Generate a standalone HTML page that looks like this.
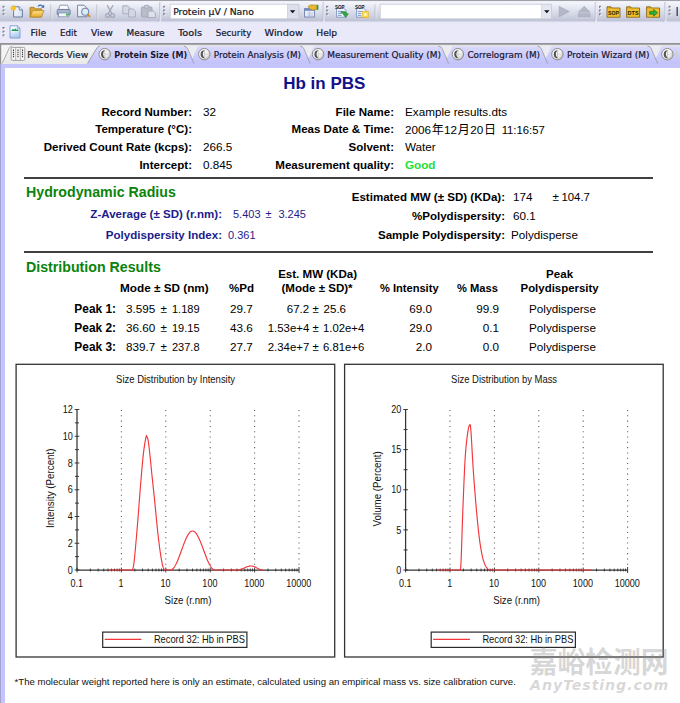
<!DOCTYPE html>
<html lang="en">
<head>
<meta charset="utf-8">
<title>Hb in PBS - Protein Size report</title>
<style>
html,body{margin:0;padding:0;}
body{width:680px;height:703px;position:relative;overflow:hidden;background:#fff;
  font-family:"Liberation Sans","Noto Sans CJK SC",sans-serif;font-size:11.45px;color:#000;}
.abs,.t,.b,.r,.rb{position:absolute;white-space:nowrap;}
/* ---------- chrome ---------- */
#tb1{position:absolute;left:0;top:0;width:680px;height:22px;
  background:linear-gradient(#8c8c98 0,#8c8c98 1px,#f4f5fb 1.5px,#eceef7 8px,#d9dcea 14px,#c9ccdd 20px,#d5d7e6 22px);}
#tb2{position:absolute;left:0;top:22px;width:680px;height:21px;background:#e9e9fa;}
#tabs{position:absolute;left:0;top:43px;width:680px;height:21px;
  background:linear-gradient(#7a7a7a 0,#8a8a8a 1.2px,#d8d8d8 2px,#f2f2f2 3.5px,#f3f3f3 12px,#e9e9e9 21px);}
#frame{position:absolute;left:0;top:63.5px;width:680px;height:640px;background:#c5c5fc;}
#page{position:absolute;left:4.8px;top:68.3px;width:675px;height:635px;background:#fff;}
.ui{font-family:"DejaVu Sans","Liberation Sans",sans-serif;font-size:9.2px;color:#1a1a2a;position:absolute;white-space:nowrap;line-height:12px;}
.grip{position:absolute;width:2px;height:11px;
  background:repeating-linear-gradient(#7f8296 0,#7f8296 1.5px,transparent 1.5px,transparent 3.5px);}
.sep{position:absolute;width:1px;height:15px;top:4px;background:#b8bbcc;box-shadow:1px 0 0 #f4f5fb;}
.combo{position:absolute;top:3px;height:16px;background:#fff;border:1px solid #c3c6d6;box-sizing:border-box;}
/* ---------- report text ---------- */
.t{line-height:14px;font-size:11.7px;}
.b{line-height:14px;font-weight:bold;font-size:11.55px;}
.r{line-height:14px;text-align:right;font-size:11.7px;}
.rb{line-height:14px;text-align:right;font-weight:bold;font-size:11.55px;}
.navy{color:#1c1c8c;}
.green{color:#0b830b;font-size:14.2px;font-weight:bold;line-height:16px;}
.hr{position:absolute;left:24px;width:628.5px;height:1.25px;background:#404040;}
.c{text-align:center;}
.cj{font-family:"Noto Sans CJK SC","WenQuanYi Zen Hei",sans-serif;font-size:12px;margin:0 0.4px 0 0.7px;}
</style>
</head>
<body>
<!-- ================= TOOLBAR ROW 1 ================= -->
<!-- ================= MENU ROW ================= -->
<!-- ================= TAB STRIP ================= -->
<!-- ================= REPORT FRAME ================= -->
<!--CHROME-BEGIN-->
<svg class="abs" style="left:0;top:0;" width="680" height="70" viewBox="0 0 680 70">
<defs>
<linearGradient id="gtb" x1="0" y1="0" x2="0" y2="1">
 <stop offset="0" stop-color="#9b9ba6"/><stop offset="0.045" stop-color="#a5a5b0"/>
 <stop offset="0.07" stop-color="#f6f7fc"/><stop offset="0.2" stop-color="#eef0f8"/>
 <stop offset="0.5" stop-color="#dcdfec"/><stop offset="0.8" stop-color="#cacddd"/>
 <stop offset="0.93" stop-color="#c0c3d5"/><stop offset="1" stop-color="#d0d2e2"/>
</linearGradient>
<linearGradient id="gtab" x1="0" y1="0" x2="0" y2="1">
 <stop offset="0" stop-color="#dedefd"/><stop offset="0.5" stop-color="#cfcffc"/><stop offset="1" stop-color="#c2c2fb"/>
</linearGradient>
<linearGradient id="gtab0" x1="0" y1="0" x2="0" y2="1">
 <stop offset="0" stop-color="#f6f6f6"/><stop offset="1" stop-color="#e9e9e9"/>
</linearGradient>
<linearGradient id="gstrip" x1="0" y1="0" x2="0" y2="1">
 <stop offset="0" stop-color="#85858a"/><stop offset="0.55" stop-color="#8f8f94"/><stop offset="1" stop-color="#d4d4d8"/>
</linearGradient>
<radialGradient id="gball" cx="0.38" cy="0.35" r="0.7">
 <stop offset="0" stop-color="#ffffff"/><stop offset="0.6" stop-color="#f0f0f0"/><stop offset="1" stop-color="#b8b8b8"/>
</radialGradient>
<linearGradient id="gfold" x1="0" y1="0" x2="0" y2="1">
 <stop offset="0" stop-color="#fbe28a"/><stop offset="1" stop-color="#e9a92c"/>
</linearGradient>
<linearGradient id="gpage" x1="0" y1="0" x2="1" y2="1">
 <stop offset="0" stop-color="#ffffff"/><stop offset="1" stop-color="#cfdcf2"/>
</linearGradient>
<linearGradient id="gpage2" x1="0" y1="0" x2="0.3" y2="1"><stop offset="0" stop-color="#ffffff"/><stop offset="0.5" stop-color="#e4eefb"/><stop offset="1" stop-color="#a9c9f0"/></linearGradient>
<g id="grip">
 <rect x="0" y="5.8" width="2" height="2" fill="#777a90"/><rect x="0" y="9.5" width="2" height="2" fill="#777a90"/><rect x="0" y="13.2" width="2" height="2" fill="#777a90"/>
 <rect x="1" y="6.8" width="1.6" height="1.6" fill="#fff" opacity=".7"/><rect x="1" y="10.5" width="1.6" height="1.6" fill="#fff" opacity=".7"/><rect x="1" y="14.2" width="1.6" height="1.6" fill="#fff" opacity=".7"/>
</g>
<g id="ball">
 <circle cx="6.2" cy="6.2" r="5.75" fill="url(#gball)" stroke="#8a8a8a" stroke-width="0.95"/>
 <path d="M6.5 2.2 A4 4 0 0 0 6.5 10.2 A5.2 5.2 0 0 1 6.5 2.2Z" fill="#3c3c3c" opacity=".88"/>
 <path d="M6.3 2V10.4" stroke="#9a9a9a" stroke-width="0.5"/><path d="M6.4 6.2H9.4" stroke="#b5b5b5" stroke-width="0.5"/>
</g>
</defs>
<rect x="0" y="0" width="680" height="22" fill="url(#gtb)"/>
<rect x="0" y="22" width="680" height="21.5" fill="#e9e9fa"/>
<rect x="0" y="21.6" width="680" height="1" fill="#e3e5f3"/>
<path d="M157.4 22 Q159.6 22 159.6 19.4 L159.6 1.4 L161.2 1.4 L161.2 22Z" fill="#e6e8f6" opacity=".95"/>
<path d="M159.6 2 V19.4 Q159.6 21.4 157.4 21.6" fill="none" stroke="#b4b7ca" stroke-width="0.7"/>
<path d="M320.8 22 Q323.0 22 323.0 19.4 L323.0 1.4 L324.6 1.4 L324.6 22Z" fill="#e6e8f6" opacity=".95"/>
<path d="M323.0 2 V19.4 Q323.0 21.4 320.8 21.6" fill="none" stroke="#b4b7ca" stroke-width="0.7"/>
<path d="M593.0 22 Q595.2 22 595.2 19.4 L595.2 1.4 L596.8000000000001 1.4 L596.8000000000001 22Z" fill="#e6e8f6" opacity=".95"/>
<path d="M595.2 2 V19.4 Q595.2 21.4 593.0 21.6" fill="none" stroke="#b4b7ca" stroke-width="0.7"/>
<path d="M662.5999999999999 22 Q664.8 22 664.8 19.4 L664.8 1.4 L666.4 1.4 L666.4 22Z" fill="#e6e8f6" opacity=".95"/>
<path d="M664.8 2 V19.4 Q664.8 21.4 662.5999999999999 21.6" fill="none" stroke="#b4b7ca" stroke-width="0.7"/>
<use href="#grip" x="2.6" y="0"/>
<use href="#grip" x="163.2" y="0"/>
<use href="#grip" x="326.2" y="0"/>
<use href="#grip" x="599.0" y="0"/>
<use href="#grip" x="668.6" y="0"/>
<g transform="translate(2.6 21.4)"><rect x="0" y="5.6" width="2" height="2" fill="#73768c"/><rect x="0" y="9.3" width="2" height="2" fill="#73768c"/><rect x="0" y="13" width="2" height="2" fill="#73768c"/><rect x="1" y="6.6" width="1.6" height="1.6" fill="#fff" opacity=".75"/><rect x="1" y="10.3" width="1.6" height="1.6" fill="#fff" opacity=".75"/><rect x="1" y="14" width="1.6" height="1.6" fill="#fff" opacity=".75"/></g>
<rect x="50.4" y="4.6" width="1" height="15" fill="#bdbcc4"/><rect x="51.4" y="4.6" width="1" height="15" fill="#eceef6" opacity=".7"/>
<rect x="96.4" y="4.6" width="1" height="15" fill="#bdbcc4"/><rect x="97.4" y="4.6" width="1" height="15" fill="#eceef6" opacity=".7"/>
<rect x="374.5" y="4.6" width="1" height="15" fill="#bdbcc4"/><rect x="375.5" y="4.6" width="1" height="15" fill="#eceef6" opacity=".7"/>
<g><path d="M13.6 6.8h5.6l3.2 3.2v7H13.6z" fill="url(#gpage)" stroke="#5b6f9a" stroke-width="0.9"/><path d="M19.2 6.8v3.2h3.2" fill="#dfe8f7" stroke="#5b6f9a" stroke-width="0.8"/><path transform="translate(13.4 8) scale(0.74) translate(-13.4 -8.4)" d="M13.4 4.4l.9 2 2-.8-.8 2 2 .9-2 .9.8 2-2-.8-.9 2-.9-2-2 .8.8-2-2-.9 2-.9-.8-2 2 .8z" fill="#f8c818" stroke="#e0a000" stroke-width="0.4"/></g>
<g><path d="M30 7.4h4.2l1.2 1.4h6.2v8.2H30z" fill="#d9a53a" stroke="#a97818" stroke-width="0.8"/><path d="M32.6 10.6h11.4l-2.6 6.4H30z" fill="url(#gfold)" stroke="#b98520" stroke-width="0.8"/><path d="M38 6.4q2.6-2.6 5 .2" fill="none" stroke="#3a68b0" stroke-width="1.1"/><path d="M44.2 4.6v3.2h-3.1z" fill="#3a68b0"/></g>
<g><path d="M60 5.2h7.6l1.4 4.4h-10.4z" fill="#fdfdff" stroke="#7886a6" stroke-width="0.8"/><rect x="57.2" y="9.4" width="13" height="5.6" rx="1" fill="#a9b5d0" stroke="#66748f" stroke-width="0.8"/><rect x="58.6" y="13" width="10.2" height="3.8" fill="#f4f6fc" stroke="#7a88a6" stroke-width="0.7"/><rect x="66" y="13.6" width="2.4" height="2" fill="#2fb84a"/></g>
<g><path d="M77.6 5.2h6.4l3 3v8.6h-9.4z" fill="url(#gpage)" stroke="#6a7a9c" stroke-width="0.9"/><circle cx="85.2" cy="11.8" r="3.5" fill="#d9ecfb" stroke="#7b8aa8" stroke-width="1.1"/><path d="M88 14.6l1.6 1.8" stroke="#e08a18" stroke-width="1.9" stroke-linecap="round"/></g>
<g fill="none" stroke="#a3a6b8" stroke-width="1.25" stroke-linecap="round"><path d="M107.4 5.6l4.6 8.2M112.8 5.6l-4.6 8.2"/><circle cx="107.6" cy="15.4" r="1.9"/><circle cx="112.6" cy="15.4" r="1.9"/></g>
<g fill="#d5d8e4" stroke="#a6a9bb" stroke-width="0.9"><path d="M122.8 5.8h5l2 2v6h-7z"/><path d="M128.6 9h4.6l2.2 2.2v5.8h-6.8z"/></g>
<g stroke="#a2a5b7" stroke-width="0.9"><rect x="141.4" y="7" width="10.6" height="10" rx="1" fill="#b9bccb"/><rect x="144.4" y="5.4" width="4.6" height="2.8" rx=".8" fill="#c9ccd9"/><path d="M148 11h5.2l2.2 2.2v4.4H148z" fill="#dfe1ea"/></g>
<rect x="170.2" y="4.2" width="128.8" height="14.6" fill="#fff" stroke="#c5c8d8" stroke-width="0.8"/>
<rect x="287.4" y="4.7" width="11.2" height="13.6" fill="#dde0ec" stroke="#c3c6d6" stroke-width="0.6"/>
<path d="M289.9 10.2h5.4l-2.7 3z" fill="#111"/>
<text x="173.2" y="14.7" font-family="'DejaVu Sans','Liberation Sans',sans-serif" font-size="9.3" fill="#14141e" stroke="#14141e" stroke-width="0.2" textLength="80.6" lengthAdjust="spacingAndGlyphs">Protein µV / Nano</text>
<g><rect x="304.6" y="8.6" width="9.8" height="8.4" fill="#e9eefa" stroke="#6b7fa8" stroke-width="0.9"/><rect x="304.6" y="8.6" width="9.8" height="2.2" fill="#6f8cc4"/><path d="M307.4 13.2h5.6M307.4 15.2h5.6M309.4 11.4v5" stroke="#9fb0d2" stroke-width="0.6"/><path d="M308 6.6q2.4-2.6 5.4-1.6l3.6.2v4.2l-4.2.6q-2.6.2-4.8-3.4z" fill="#e8b830" stroke="#a8801c" stroke-width="0.6"/><rect x="316.8" y="4.8" width="1.6" height="5" fill="#2f9a48"/></g>
<g><path d="M336.6 8.2h7l2.6 2.6v6.4H336.6z" fill="#eef3fc" stroke="#6d86b8" stroke-width="0.8"/><path d="M338 11.4h4.4M338 13.4h3.4M338 15.4h3.4" stroke="#6f8fca" stroke-width="0.9"/><text x="335" y="8.9" font-family="'Liberation Sans',sans-serif" font-weight="bold" font-size="5.4" fill="#1a1a1a" textLength="9.6" lengthAdjust="spacingAndGlyphs">SOP</text><path d="M341.2 11.6h3.4q2 0 2 2.2h1.8l-2.8 3.6-2.8-3.6h1.8q0-.6-.8-.6h-2.6z" fill="#2fae3e" stroke="#1c7a28" stroke-width="0.5"/></g>
<g><path d="M356.6 8.2h7l2.6 2.6v6.4H356.6z" fill="#eef3fc" stroke="#6d86b8" stroke-width="0.8"/><path d="M358 11.4h4.4M358 13.4h3.4M358 15.4h3.4" stroke="#6f8fca" stroke-width="0.9"/><text x="355" y="8.9" font-family="'Liberation Sans',sans-serif" font-weight="bold" font-size="5.4" fill="#1a1a1a" textLength="9.6" lengthAdjust="spacingAndGlyphs">SOP</text><rect x="362.4" y="11.6" width="6" height="6" fill="#ffd83a" stroke="#e2ad10" stroke-width="0.5"/><circle cx="365.4" cy="14.6" r="1.5" fill="#fff6c8"/></g>
<rect x="380.2" y="4.2" width="171.4" height="14.6" fill="#fff" stroke="#c5c8d8" stroke-width="0.8"/>
<rect x="541.2" y="4.7" width="10" height="13.6" fill="#e4e7f1" stroke="#c9ccd9" stroke-width="0.5"/>
<path d="M544.1 10.2h5.4l-2.7 3z" fill="#111"/>
<path d="M559.2 6.4l10 5.2-10 5.2z" fill="#b4b7c7" stroke="#a3a6b8" stroke-width="0.6"/>
<path d="M584.2 6.2l6 6h-12z" fill="#b4b7c7" stroke="#a3a6b8" stroke-width="0.5"/><rect x="578.2" y="13.8" width="12" height="3" fill="#b4b7c7" stroke="#a3a6b8" stroke-width="0.5"/>
<g><path d="M607 6.8h4l1 1.2h8v9.2H607z" fill="#dca520" stroke="#7e5c0e" stroke-width="0.8"/><rect x="607.6" y="8.6" width="11.8" height="8" fill="#efbe2e"/><text x="608" y="15" font-family="'Liberation Sans',sans-serif" font-weight="bold" font-size="6.2" fill="#2a1c00" textLength="11" lengthAdjust="spacingAndGlyphs">SOP</text></g>
<g><path d="M626.6 6.8h4l1 1.2h8v9.2H626.6z" fill="#dca520" stroke="#7e5c0e" stroke-width="0.8"/><rect x="627.2" y="8.6" width="11.8" height="8" fill="#efbe2e"/><text x="627.6" y="15" font-family="'Liberation Sans',sans-serif" font-weight="bold" font-size="6.2" fill="#2a1c00" textLength="11" lengthAdjust="spacingAndGlyphs">DTS</text></g>
<g><path d="M646.6 6.8h4l1 1.2h8v9.2H646.6z" fill="#dca520" stroke="#7e5c0e" stroke-width="0.8"/><rect x="647.2" y="8.6" width="11.8" height="8" fill="#efbe2e"/></g>
<path d="M649.6 11.4h4v-2l4 3.4-4 3.4v-2h-4z" fill="#2fae3e" stroke="#14641e" stroke-width="0.6"/>
<rect x="676.4" y="7" width="1.6" height="9" fill="#555a70"/>
<g><path d="M10 25.8h7.4l2.6 2.6v9.6H10z" fill="url(#gpage2)" stroke="#7d9ad0" stroke-width="0.9"/><path d="M17.4 25.8v2.6H20" fill="none" stroke="#7d9ad0" stroke-width="0.7"/><path d="M11.4 31q1.4-3.6 2.8-1 1.2-3 2.4 0 1.2-2 2 1z" fill="#19a050"/></g>
<text x="30.6" y="35.7" font-family="'DejaVu Sans','Liberation Sans',sans-serif" font-size="9.3" fill="#16162a" stroke="#16162a" stroke-width="0.22" textLength="15.7" lengthAdjust="spacingAndGlyphs">File</text>
<text x="60.0" y="35.7" font-family="'DejaVu Sans','Liberation Sans',sans-serif" font-size="9.3" fill="#16162a" stroke="#16162a" stroke-width="0.22" textLength="16.9" lengthAdjust="spacingAndGlyphs">Edit</text>
<text x="91.0" y="35.7" font-family="'DejaVu Sans','Liberation Sans',sans-serif" font-size="9.3" fill="#16162a" stroke="#16162a" stroke-width="0.22" textLength="21.7" lengthAdjust="spacingAndGlyphs">View</text>
<text x="126.6" y="35.7" font-family="'DejaVu Sans','Liberation Sans',sans-serif" font-size="9.3" fill="#16162a" stroke="#16162a" stroke-width="0.22" textLength="38.0" lengthAdjust="spacingAndGlyphs">Measure</text>
<text x="178.0" y="35.7" font-family="'DejaVu Sans','Liberation Sans',sans-serif" font-size="9.3" fill="#16162a" stroke="#16162a" stroke-width="0.22" textLength="24.0" lengthAdjust="spacingAndGlyphs">Tools</text>
<text x="215.8" y="35.7" font-family="'DejaVu Sans','Liberation Sans',sans-serif" font-size="9.3" fill="#16162a" stroke="#16162a" stroke-width="0.22" textLength="35.5" lengthAdjust="spacingAndGlyphs">Security</text>
<text x="264.5" y="35.7" font-family="'DejaVu Sans','Liberation Sans',sans-serif" font-size="9.3" fill="#16162a" stroke="#16162a" stroke-width="0.22" textLength="38.4" lengthAdjust="spacingAndGlyphs">Window</text>
<text x="316.3" y="35.7" font-family="'DejaVu Sans','Liberation Sans',sans-serif" font-size="9.3" fill="#16162a" stroke="#16162a" stroke-width="0.22" textLength="20.8" lengthAdjust="spacingAndGlyphs">Help</text>
<rect x="0" y="43.2" width="680" height="21" fill="url(#gtab)"/>
<rect x="0" y="44.6" width="680" height="2.2" fill="#e2e2ea"/>
<path d="M0 43.2H99.2L87.2 64H0z" fill="url(#gtab0)"/>
<path d="M0 43.2H10.6L2.2 63.6H0z" fill="#f4f4f4"/>
<rect x="0" y="43.1" width="680" height="2" fill="url(#gstrip)"/>
<rect x="0" y="44" width="1.2" height="20" fill="#8f8f94"/>
<path d="M2.2 63.4 L9.2 48.2 Q10 46.4 12 46.2" fill="none" stroke="#9c9c9c" stroke-width="0.85"/>
<path d="M87.4 63.6 L97.2 47.6 Q98 46.4 99.8 46.3" fill="none" stroke="#9a9aa0" stroke-width="0.85"/>
<path d="M185.4 45.4H198.20000000000002L192.20000000000002 58.6z" fill="#ececf0"/>
<path d="M183.8 46.1 Q186.6 46.3 187.8 49 L194.0 63.6" fill="none" stroke="#9a9aa4" stroke-width="0.85"/>
<path d="M301.6 45.4H314.40000000000003L308.40000000000003 58.6z" fill="#ececf0"/>
<path d="M300.0 46.1 Q302.8 46.3 304.0 49 L310.20000000000005 63.6" fill="none" stroke="#9a9aa4" stroke-width="0.85"/>
<path d="M440.0 45.4H452.8L446.8 58.6z" fill="#ececf0"/>
<path d="M438.4 46.1 Q441.2 46.3 442.4 49 L448.6 63.6" fill="none" stroke="#9a9aa4" stroke-width="0.85"/>
<path d="M539.0 45.4H551.8L545.8 58.6z" fill="#ececf0"/>
<path d="M537.4 46.1 Q540.2 46.3 541.4 49 L547.6 63.6" fill="none" stroke="#9a9aa4" stroke-width="0.85"/>
<path d="M649.0 45.4H661.8L655.8 58.6z" fill="#ececf0"/>
<path d="M647.4 46.1 Q650.2 46.3 651.4 49 L657.6 63.6" fill="none" stroke="#9a9aa4" stroke-width="0.85"/>
<g><rect x="11.2" y="47.4" width="13.6" height="13" rx="1.2" fill="#f7f7f7" stroke="#8a8a8a" stroke-width="0.8"/><path d="M15.7 47.6v12.6M20.3 47.6v12.6" stroke="#9a9a9a" stroke-width="0.7"/><path d="M13.5 49.6v7.6M18 49.6v7.6M22.5 49.6v7.6" stroke="#3c3c3c" stroke-width="1.1" stroke-dasharray="1.4 0.7"/></g>
<use href="#ball" x="98.5" y="48"/>
<use href="#ball" x="198.1" y="48"/>
<use href="#ball" x="311.9" y="48"/>
<use href="#ball" x="451.7" y="48"/>
<use href="#ball" x="551.2" y="48"/>
<use href="#ball" x="661.2" y="48"/>
<text x="27.2" y="58.3" font-family="'DejaVu Sans','Liberation Sans',sans-serif" font-size="9.3" fill="#17172e" stroke="#17172e" stroke-width="0.2" textLength="61.0" lengthAdjust="spacingAndGlyphs">Records View</text>
<text x="114.2" y="58.3" font-family="'DejaVu Sans','Liberation Sans',sans-serif" font-size="9.3" font-weight="bold" fill="#17172e" stroke="#17172e" stroke-width="0.0" textLength="73.0" lengthAdjust="spacingAndGlyphs">Protein Size (M)</text>
<text x="213.8" y="58.3" font-family="'DejaVu Sans','Liberation Sans',sans-serif" font-size="9.3" fill="#17172e" stroke="#17172e" stroke-width="0.2" textLength="87.2" lengthAdjust="spacingAndGlyphs">Protein Analysis (M)</text>
<text x="327.2" y="58.3" font-family="'DejaVu Sans','Liberation Sans',sans-serif" font-size="9.3" fill="#17172e" stroke="#17172e" stroke-width="0.2" textLength="113.8" lengthAdjust="spacingAndGlyphs">Measurement Quality (M)</text>
<text x="467.4" y="58.3" font-family="'DejaVu Sans','Liberation Sans',sans-serif" font-size="9.3" fill="#17172e" stroke="#17172e" stroke-width="0.2" textLength="72.6" lengthAdjust="spacingAndGlyphs">Correlogram (M)</text>
<text x="567.0" y="58.3" font-family="'DejaVu Sans','Liberation Sans',sans-serif" font-size="9.3" fill="#17172e" stroke="#17172e" stroke-width="0.2" textLength="82.5" lengthAdjust="spacingAndGlyphs">Protein Wizard (M)</text>
<text x="675.6" y="58.3" font-family="'DejaVu Sans','Liberation Sans',sans-serif" font-size="9.3" fill="#cfcfb8">I</text>
</svg>
<!--CHROME-END-->
<div id="frame"></div>
<div id="page"></div>
<div class="abs" style="left:0;top:64px;width:1px;height:639px;background:#a3a3d4;"></div>

<!-- title -->
<div class="b navy c" style="left:224.3px;width:200px;top:74.2px;font-size:17px;line-height:20px;color:#11118a;">Hb in PBS</div>

<!-- header block left -->
<div class="rb" style="right:488px;top:105px;">Record Number:</div>
<div class="rb" style="right:488px;top:121.5px;">Temperature (°C):</div>
<div class="rb" style="right:488px;top:139.6px;">Derived Count Rate (kcps):</div>
<div class="rb" style="right:488px;top:157.5px;">Intercept:</div>
<div class="t" style="left:203px;top:105px;">32</div>
<div class="t" style="left:203px;top:139.6px;">266.5</div>
<div class="t" style="left:203px;top:157.5px;">0.845</div>
<!-- header block right -->
<div class="rb" style="right:286px;top:105px;">File Name:</div>
<div class="rb" style="right:286px;top:121.5px;">Meas Date &amp; Time:</div>
<div class="rb" style="right:286px;top:139.6px;">Solvent:</div>
<div class="rb" style="right:286px;top:157.5px;">Measurement quality:</div>
<div class="t" style="left:405px;top:105px;">Example results.dts</div>
<div class="t" style="left:405px;top:121.5px;">2006<span class="cj">年</span>12<span class="cj">月</span>20<span class="cj">日</span><span style="margin-left:5.3px;font-size:11.3px">11:16:57</span></div>
<div class="t" style="left:405px;top:139.6px;">Water</div>
<div class="t" style="left:405px;top:157.5px;color:#22e03a;font-weight:bold;">Good</div>

<div class="hr" style="top:177.3px;"></div>

<!-- hydrodynamic radius -->
<div class="abs green" style="left:26px;top:184px;">Hydrodynamic Radius</div>
<div class="rb navy" style="right:458px;top:207px;">Z-Average (± SD) (r.nm):</div>
<div class="t navy" style="left:233px;top:207px;font-size:11px;">5.403</div>
<div class="t navy" style="left:265.6px;top:207px;font-size:11px;">±</div>
<div class="t navy" style="left:278.4px;top:207px;font-size:11px;">3.245</div>
<div class="rb navy" style="right:458px;top:228px;">Polydispersity Index:</div>
<div class="t navy" style="left:228px;top:228px;font-size:11px;">0.361</div>

<div class="rb" style="right:175px;top:190px;">Estimated MW (± SD) (KDa):</div>
<div class="t" style="left:513px;top:190px;">174</div>
<div class="t" style="left:552.4px;top:190px;">±</div><div class="t" style="left:561.4px;top:190px;font-size:11.4px;">104.7</div>
<div class="rb" style="right:175px;top:209px;">%Polydispersity:</div>
<div class="t" style="left:513px;top:209px;">60.1</div>
<div class="rb" style="right:175px;top:228px;">Sample Polydispersity:</div>
<div class="t" style="left:511px;top:228px;">Polydisperse</div>

<div class="hr" style="top:251.3px;"></div>

<!-- distribution results -->
<div class="abs green" style="left:26px;top:259px;">Distribution Results</div>
<div class="b" style="left:120px;top:280.8px;font-size:11.75px;">Mode ± SD (nm)</div>
<div class="b" style="left:229px;top:280.8px;">%Pd</div>
<div class="b c" style="left:257.6px;width:120px;top:266.7px;">Est. MW (KDa)</div>
<div class="b c" style="left:257px;width:120px;top:280.9px;">(Mode ± SD)*</div>
<div class="b" style="left:380px;top:280.8px;font-size:11.1px;">% Intensity</div>
<div class="b" style="left:457px;top:280.8px;font-size:11.15px;">% Mass</div>
<div class="b c" style="left:509.6px;width:100px;top:266.8px;">Peak</div>
<div class="b c" style="left:509.6px;width:100px;top:280.8px;font-size:11.45px;">Polydispersity</div>

<div class="rb" style="right:564px;top:301.6px;font-size:11.9px;">Peak 1:</div>
<div class="rb" style="right:564px;top:320.6px;font-size:11.9px;">Peak 2:</div>
<div class="rb" style="right:564px;top:339.6px;font-size:11.9px;">Peak 3:</div>

<div class="t" style="left:126px;top:301.6px;">3.595</div><div class="t" style="left:160.6px;top:301.6px;">±</div><div class="t" style="left:172px;top:301.6px;font-size:11px;">1.189</div>
<div class="t" style="left:126px;top:320.6px;">36.60</div><div class="t" style="left:160.6px;top:320.6px;">±</div><div class="t" style="left:172px;top:320.6px;font-size:11px;">19.15</div>
<div class="t" style="left:126px;top:339.6px;">839.7</div><div class="t" style="left:160.6px;top:339.6px;">±</div><div class="t" style="left:172px;top:339.6px;font-size:11px;">237.8</div>

<div class="t" style="left:230px;top:301.6px;">29.7</div>
<div class="t" style="left:230px;top:320.6px;">43.6</div>
<div class="t" style="left:230px;top:339.6px;">27.7</div>

<div class="r" style="right:361.3px;top:301.6px;font-size:11.5px;">67.2 ±</div><div class="t" style="left:323.6px;top:301.6px;font-size:11.5px;">25.6</div>
<div class="r" style="right:361.3px;top:320.6px;font-size:11.4px;">1.53e+4 ±</div><div class="r" style="right:315.8px;top:320.6px;font-size:11.3px;">1.02e+4</div>
<div class="r" style="right:361.3px;top:339.6px;font-size:11.4px;">2.34e+7 ±</div><div class="r" style="right:315.8px;top:339.6px;font-size:11.3px;">6.81e+6</div>

<div class="r" style="right:248px;top:301.6px;">69.0</div>
<div class="r" style="right:248px;top:320.6px;">29.0</div>
<div class="r" style="right:248px;top:339.6px;">2.0</div>

<div class="r" style="right:181px;top:301.6px;">99.9</div>
<div class="r" style="right:181px;top:320.6px;">0.1</div>
<div class="r" style="right:181px;top:339.6px;">0.0</div>

<div class="t" style="left:529px;top:301.6px;">Polydisperse</div>
<div class="t" style="left:529px;top:320.6px;">Polydisperse</div>
<div class="t" style="left:529px;top:339.6px;">Polydisperse</div>

<!-- CHARTS -->
<!--CHARTS-BEGIN-->
<svg class="abs" style="left:0;top:0;" width="680" height="703" viewBox="0 0 680 703" font-family="Liberation Sans, sans-serif">
<rect x="16.1" y="364.3" width="318.6" height="292.7" fill="#fff" stroke="#333" stroke-width="1.3"/>
<text x="175.6" y="382.9" font-size="10.05" text-anchor="middle" textLength="119" lengthAdjust="spacingAndGlyphs" fill="#111">Size Distribution by Intensity</text>
<line x1="121.40" y1="410.0" x2="121.40" y2="568.0" stroke="#555" stroke-width="1.05" stroke-dasharray="1.05 4.25"/>
<line x1="165.80" y1="410.0" x2="165.80" y2="568.0" stroke="#555" stroke-width="1.05" stroke-dasharray="1.05 4.25"/>
<line x1="210.20" y1="410.0" x2="210.20" y2="568.0" stroke="#555" stroke-width="1.05" stroke-dasharray="1.05 4.25"/>
<line x1="254.60" y1="410.0" x2="254.60" y2="568.0" stroke="#555" stroke-width="1.05" stroke-dasharray="1.05 4.25"/>
<line x1="299.00" y1="410.0" x2="299.00" y2="568.0" stroke="#555" stroke-width="1.05" stroke-dasharray="1.05 4.25"/>
<path d="M77 409.5 V570.0 H299.0" fill="none" stroke="#363636" stroke-width="1.25"/>
<text transform="translate(72.8 573.70) scale(0.9 1)" font-size="10.05" text-anchor="end" fill="#111">0</text>
<text transform="translate(72.8 546.95) scale(0.9 1)" font-size="10.05" text-anchor="end" fill="#111">2</text>
<text transform="translate(72.8 520.20) scale(0.9 1)" font-size="10.05" text-anchor="end" fill="#111">4</text>
<text transform="translate(72.8 493.45) scale(0.9 1)" font-size="10.05" text-anchor="end" fill="#111">6</text>
<text transform="translate(72.8 466.70) scale(0.9 1)" font-size="10.05" text-anchor="end" fill="#111">8</text>
<text transform="translate(72.8 439.95) scale(0.9 1)" font-size="10.05" text-anchor="end" fill="#111">10</text>
<text transform="translate(72.8 413.20) scale(0.9 1)" font-size="10.05" text-anchor="end" fill="#111">12</text>
<path d="M74.7 570.00H79.3M75.0 556.62H79.0M74.7 543.25H79.3M75.0 529.88H79.0M74.7 516.50H79.3M75.0 503.12H79.0M74.7 489.75H79.3M75.0 476.38H79.0M74.7 463.00H79.3M75.0 449.62H79.0M74.7 436.25H79.3M75.0 422.88H79.0M74.7 409.50H79.3M77.00 567.6V572.4M90.37 568.6V571.4M98.18 568.6V571.4M103.73 568.6V571.4M108.03 568.6V571.4M111.55 568.6V571.4M114.52 568.6V571.4M117.10 568.6V571.4M119.37 568.6V571.4M121.40 567.6V572.4M134.77 568.6V571.4M142.58 568.6V571.4M148.13 568.6V571.4M152.43 568.6V571.4M155.95 568.6V571.4M158.92 568.6V571.4M161.50 568.6V571.4M163.77 568.6V571.4M165.80 567.6V572.4M179.17 568.6V571.4M186.98 568.6V571.4M192.53 568.6V571.4M196.83 568.6V571.4M200.35 568.6V571.4M203.32 568.6V571.4M205.90 568.6V571.4M208.17 568.6V571.4M210.20 567.6V572.4M223.57 568.6V571.4M231.38 568.6V571.4M236.93 568.6V571.4M241.23 568.6V571.4M244.75 568.6V571.4M247.72 568.6V571.4M250.30 568.6V571.4M252.57 568.6V571.4M254.60 567.6V572.4M267.97 568.6V571.4M275.78 568.6V571.4M281.33 568.6V571.4M285.63 568.6V571.4M289.15 568.6V571.4M292.12 568.6V571.4M294.70 568.6V571.4M296.97 568.6V571.4M299.00 567.0V573.0" fill="none" stroke="#303030" stroke-width="0.95"/>
<path d="M108.50 570.00 L132.40 570.00 L132.53 569.57 L132.71 569.03 L132.92 568.37 L133.15 567.55 L133.38 566.54 L133.60 565.32 L133.79 564.05 L133.97 562.79 L134.15 561.35 L134.35 559.52 L134.60 557.12 L134.90 553.95 L135.28 549.85 L135.72 544.93 L136.21 539.45 L136.71 533.62 L137.22 527.67 L137.70 521.85 L138.17 516.02 L138.63 509.96 L139.09 503.79 L139.56 497.63 L140.03 491.57 L140.50 485.74 L140.98 479.97 L141.47 474.16 L141.96 468.46 L142.45 463.03 L142.93 458.04 L143.40 453.64 L143.87 449.81 L144.35 446.41 L144.82 443.45 L145.27 440.92 L145.67 438.83 L146.00 437.19 L146.24 436.10 L146.41 435.61 L146.53 435.55 L146.63 435.78 L146.75 436.15 L146.90 436.52 L147.09 436.86 L147.29 437.31 L147.51 437.89 L147.73 438.66 L147.96 439.66 L148.20 440.93 L148.44 442.48 L148.70 444.28 L148.96 446.31 L149.23 448.55 L149.51 451.00 L149.80 453.64 L150.10 456.47 L150.40 459.51 L150.72 462.75 L151.05 466.20 L151.41 469.85 L151.80 473.70 L152.23 477.83 L152.70 482.25 L153.20 486.87 L153.71 491.61 L154.21 496.39 L154.70 501.12 L155.17 505.90 L155.64 510.83 L156.11 515.79 L156.57 520.69 L157.03 525.42 L157.50 529.88 L157.97 534.13 L158.45 538.27 L158.93 542.25 L159.40 546.00 L159.86 549.47 L160.30 552.61 L160.72 555.40 L161.13 557.89 L161.53 560.09 L161.90 562.05 L162.26 563.78 L162.60 565.32 L162.93 566.62 L163.24 567.65 L163.54 568.45 L163.81 569.08 L164.03 569.58 L164.20 570.00 L170.40 570.00 L170.95 569.94 L171.50 569.76 L172.06 569.46 L172.61 569.04 L173.16 568.51 L173.72 567.87 L174.27 567.12 L174.82 566.27 L175.37 565.32 L175.93 564.28 L176.48 563.15 L177.03 561.95 L177.58 560.68 L178.13 559.34 L178.69 557.95 L179.24 556.51 L179.79 555.03 L180.34 553.53 L180.90 552.00 L181.45 550.47 L182.00 548.94 L182.56 547.42 L183.11 545.91 L183.66 544.44 L184.21 543.00 L184.77 541.61 L185.32 540.27 L185.87 538.99 L186.42 537.79 L186.97 536.66 L187.53 535.62 L188.08 534.67 L188.63 533.82 L189.19 533.07 L189.74 532.43 L190.29 531.90 L190.84 531.48 L191.40 531.19 L191.95 531.01 L192.50 530.95 L193.06 531.01 L193.62 531.19 L194.19 531.48 L194.75 531.90 L195.31 532.43 L195.88 533.07 L196.44 533.82 L197.00 534.67 L197.56 535.62 L198.12 536.66 L198.69 537.79 L199.25 538.99 L199.81 540.27 L200.38 541.61 L200.94 543.00 L201.50 544.44 L202.06 545.91 L202.62 547.42 L203.19 548.94 L203.75 550.47 L204.31 552.00 L204.88 553.53 L205.44 555.03 L206.00 556.51 L206.56 557.95 L207.12 559.34 L207.69 560.68 L208.25 561.95 L208.81 563.15 L209.38 564.28 L209.94 565.32 L210.50 566.27 L211.06 567.12 L211.62 567.87 L212.19 568.51 L212.75 569.04 L213.31 569.46 L213.88 569.76 L214.44 569.94 L215.00 570.00 L237.50 570.00 L237.84 569.99 L238.18 569.98 L238.51 569.94 L238.85 569.90 L239.19 569.85 L239.53 569.78 L239.86 569.70 L240.20 569.62 L240.54 569.52 L240.88 569.41 L241.21 569.30 L241.55 569.17 L241.89 569.04 L242.22 568.90 L242.56 568.76 L242.90 568.61 L243.24 568.46 L243.57 568.31 L243.91 568.15 L244.25 567.99 L244.59 567.84 L244.93 567.68 L245.26 567.53 L245.60 567.37 L245.94 567.23 L246.28 567.08 L246.61 566.95 L246.95 566.81 L247.29 566.69 L247.62 566.58 L247.96 566.47 L248.30 566.37 L248.64 566.28 L248.97 566.21 L249.31 566.14 L249.65 566.09 L249.99 566.04 L250.32 566.01 L250.66 565.99 L251.00 565.99 L251.30 565.99 L251.60 566.01 L251.90 566.04 L252.20 566.09 L252.50 566.14 L252.80 566.21 L253.10 566.28 L253.40 566.37 L253.70 566.47 L254.00 566.58 L254.30 566.69 L254.60 566.81 L254.90 566.95 L255.20 567.08 L255.50 567.23 L255.80 567.37 L256.10 567.53 L256.40 567.68 L256.70 567.84 L257.00 567.99 L257.30 568.15 L257.60 568.31 L257.90 568.46 L258.20 568.61 L258.50 568.76 L258.80 568.90 L259.10 569.04 L259.40 569.17 L259.70 569.30 L260.00 569.41 L260.30 569.52 L260.60 569.62 L260.90 569.70 L261.20 569.78 L261.50 569.85 L261.80 569.90 L262.10 569.94 L262.40 569.98 L262.70 569.99 L263.00 570.00 L263.00 570.00" fill="none" stroke="#f2363a" stroke-width="1.15" stroke-linejoin="round"/>
<text transform="translate(76.7 586.6) scale(0.9 1)" font-size="10.05" text-anchor="middle" fill="#111">0.1</text>
<text transform="translate(121.1 586.6) scale(0.9 1)" font-size="10.05" text-anchor="middle" fill="#111">1</text>
<text transform="translate(165.5 586.6) scale(0.9 1)" font-size="10.05" text-anchor="middle" fill="#111">10</text>
<text transform="translate(209.9 586.6) scale(0.9 1)" font-size="10.05" text-anchor="middle" fill="#111">100</text>
<text transform="translate(254.3 586.6) scale(0.9 1)" font-size="10.05" text-anchor="middle" fill="#111">1000</text>
<text transform="translate(298.7 586.6) scale(0.9 1)" font-size="10.05" text-anchor="middle" fill="#111">10000</text>
<text x="188.0" y="604" font-size="10.05" text-anchor="middle" textLength="46.8" lengthAdjust="spacingAndGlyphs" fill="#111">Size (r.nm)</text>
<text transform="translate(53.6 488.2) rotate(-90)" font-size="10.5" text-anchor="middle" textLength="79.5" lengthAdjust="spacingAndGlyphs" fill="#111">Intensity (Percent)</text>
<rect x="102.7" y="632.1" width="144.2" height="15.3" fill="#fff" stroke="#2b2b2b" stroke-width="1.2"/>
<line x1="104.7" y1="639.3" x2="141.4" y2="639.3" stroke="#f2363a" stroke-width="1.15"/>
<text x="153.9" y="643.4" font-size="10.05" textLength="91" lengthAdjust="spacingAndGlyphs" fill="#111">Record 32: Hb in PBS</text>
<rect x="344.6" y="364.3" width="318.6" height="292.7" fill="#fff" stroke="#333" stroke-width="1.3"/>
<text x="504.1" y="382.9" font-size="10.05" text-anchor="middle" textLength="106" lengthAdjust="spacingAndGlyphs" fill="#111">Size Distribution by Mass</text>
<line x1="450.00" y1="410.0" x2="450.00" y2="568.0" stroke="#555" stroke-width="1.05" stroke-dasharray="1.05 4.25"/>
<line x1="494.40" y1="410.0" x2="494.40" y2="568.0" stroke="#555" stroke-width="1.05" stroke-dasharray="1.05 4.25"/>
<line x1="538.80" y1="410.0" x2="538.80" y2="568.0" stroke="#555" stroke-width="1.05" stroke-dasharray="1.05 4.25"/>
<line x1="583.20" y1="410.0" x2="583.20" y2="568.0" stroke="#555" stroke-width="1.05" stroke-dasharray="1.05 4.25"/>
<line x1="627.60" y1="410.0" x2="627.60" y2="568.0" stroke="#555" stroke-width="1.05" stroke-dasharray="1.05 4.25"/>
<path d="M405.6 409.5 V570.0 H627.6" fill="none" stroke="#363636" stroke-width="1.25"/>
<text transform="translate(401.4 573.70) scale(0.9 1)" font-size="10.05" text-anchor="end" fill="#111">0</text>
<text transform="translate(401.4 533.58) scale(0.9 1)" font-size="10.05" text-anchor="end" fill="#111">5</text>
<text transform="translate(401.4 493.45) scale(0.9 1)" font-size="10.05" text-anchor="end" fill="#111">10</text>
<text transform="translate(401.4 453.32) scale(0.9 1)" font-size="10.05" text-anchor="end" fill="#111">15</text>
<text transform="translate(401.4 413.20) scale(0.9 1)" font-size="10.05" text-anchor="end" fill="#111">20</text>
<path d="M403.3 570.00H407.9M403.6 549.94H407.6M403.3 529.88H407.9M403.6 509.81H407.6M403.3 489.75H407.9M403.6 469.69H407.6M403.3 449.62H407.9M403.6 429.56H407.6M403.3 409.50H407.9M405.60 567.6V572.4M418.97 568.6V571.4M426.78 568.6V571.4M432.33 568.6V571.4M436.63 568.6V571.4M440.15 568.6V571.4M443.12 568.6V571.4M445.70 568.6V571.4M447.97 568.6V571.4M450.00 567.6V572.4M463.37 568.6V571.4M471.18 568.6V571.4M476.73 568.6V571.4M481.03 568.6V571.4M484.55 568.6V571.4M487.52 568.6V571.4M490.10 568.6V571.4M492.37 568.6V571.4M494.40 567.6V572.4M507.77 568.6V571.4M515.58 568.6V571.4M521.13 568.6V571.4M525.43 568.6V571.4M528.95 568.6V571.4M531.92 568.6V571.4M534.50 568.6V571.4M536.77 568.6V571.4M538.80 567.6V572.4M552.17 568.6V571.4M559.98 568.6V571.4M565.53 568.6V571.4M569.83 568.6V571.4M573.35 568.6V571.4M576.32 568.6V571.4M578.90 568.6V571.4M581.17 568.6V571.4M583.20 567.6V572.4M596.57 568.6V571.4M604.38 568.6V571.4M609.93 568.6V571.4M614.23 568.6V571.4M617.75 568.6V571.4M620.72 568.6V571.4M623.30 568.6V571.4M625.57 568.6V571.4M627.60 567.0V573.0" fill="none" stroke="#303030" stroke-width="0.95"/>
<path d="M437.10 570.00 L460.40 570.00 L460.48 569.15 L460.57 568.37 L460.69 567.24 L460.83 565.39 L461.00 562.43 L461.20 557.96 L461.44 551.54 L461.71 543.40 L462.01 534.14 L462.33 524.38 L462.67 514.73 L463.00 505.80 L463.34 497.26 L463.70 488.56 L464.06 479.97 L464.44 471.77 L464.82 464.24 L465.20 457.65 L465.59 452.07 L465.99 447.28 L466.40 443.15 L466.81 439.58 L467.21 436.43 L467.60 433.57 L467.99 431.04 L468.39 428.91 L468.78 427.21 L469.15 425.94 L469.49 425.11 L469.80 424.75 L470.05 424.68 L470.24 424.87 L470.40 425.50 L470.56 426.77 L470.75 428.86 L471.00 431.97 L471.30 436.39 L471.63 442.02 L471.99 448.47 L472.37 455.36 L472.78 462.30 L473.20 468.88 L473.65 475.31 L474.14 481.93 L474.65 488.60 L475.17 495.16 L475.69 501.48 L476.20 507.41 L476.70 512.99 L477.20 518.37 L477.70 523.51 L478.20 528.36 L478.70 532.90 L479.20 537.10 L479.70 540.93 L480.20 544.41 L480.70 547.58 L481.20 550.47 L481.70 553.12 L482.20 555.55 L482.70 557.74 L483.21 559.63 L483.71 561.27 L484.21 562.72 L484.71 564.01 L485.20 565.18 L485.69 566.22 L486.19 567.06 L486.69 567.74 L487.16 568.31 L487.61 568.78 L488.00 569.20 L488.35 569.53 L488.68 569.73 L488.98 569.85 L489.23 569.91 L489.44 569.95 L489.60 570.00 L591.60 570.00" fill="none" stroke="#f2363a" stroke-width="1.15" stroke-linejoin="round"/>
<text transform="translate(405.3 586.6) scale(0.9 1)" font-size="10.05" text-anchor="middle" fill="#111">0.1</text>
<text transform="translate(449.7 586.6) scale(0.9 1)" font-size="10.05" text-anchor="middle" fill="#111">1</text>
<text transform="translate(494.1 586.6) scale(0.9 1)" font-size="10.05" text-anchor="middle" fill="#111">10</text>
<text transform="translate(538.5 586.6) scale(0.9 1)" font-size="10.05" text-anchor="middle" fill="#111">100</text>
<text transform="translate(582.9 586.6) scale(0.9 1)" font-size="10.05" text-anchor="middle" fill="#111">1000</text>
<text transform="translate(627.3 586.6) scale(0.9 1)" font-size="10.05" text-anchor="middle" fill="#111">10000</text>
<text x="516.6" y="604" font-size="10.05" text-anchor="middle" textLength="46.8" lengthAdjust="spacingAndGlyphs" fill="#111">Size (r.nm)</text>
<text transform="translate(381.4 488.8) rotate(-90)" font-size="10.5" text-anchor="middle" textLength="75.2" lengthAdjust="spacingAndGlyphs" fill="#111">Volume (Percent)</text>
<rect x="431.2" y="632.1" width="144.2" height="15.3" fill="#fff" stroke="#2b2b2b" stroke-width="1.2"/>
<line x1="433.2" y1="639.3" x2="469.9" y2="639.3" stroke="#f2363a" stroke-width="1.15"/>
<text x="482.4" y="643.4" font-size="10.05" textLength="91" lengthAdjust="spacingAndGlyphs" fill="#111">Record 32: Hb in PBS</text>
</svg>
<!--CHARTS-END-->

<!-- footnote -->
<div class="t" style="left:14.6px;top:676.2px;font-size:9.6px;line-height:12px;color:#111;">*The molecular weight reported here is only an estimate, calculated using an empirical mass vs. size calibration curve.</div>

<!-- watermark -->
<svg class="abs" style="left:0;top:640px;" width="680" height="63" viewBox="0 640 680 63">
<text x="529.8" y="673" font-family="'Noto Sans CJK SC','WenQuanYi Zen Hei',sans-serif" font-weight="bold" font-size="29" fill="#8c8c8c" fill-opacity="0.36" textLength="138.8" lengthAdjust="spacingAndGlyphs">嘉峪检测网</text>
<text x="530" y="690.4" font-family="'DejaVu Sans','Liberation Sans',sans-serif" font-weight="bold" font-style="italic" font-size="14.2" fill="#8c8c8c" fill-opacity="0.34" textLength="138.2" lengthAdjust="spacing">AnyTesting.com</text>
</svg>
</body>
</html>
